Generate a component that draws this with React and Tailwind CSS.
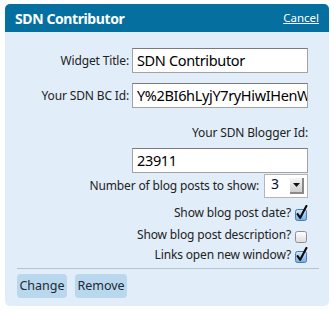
import React from "react";

const font = { fontFamily: '"Noto Sans", "DejaVu Sans", sans-serif' };

function Check({ checked }) {
  const id = checked ? "cbOn" : "cbOff";
  return (
    <svg width="14" height="16" viewBox="0 0 14 16" className="block">
      <defs>
        <linearGradient id={id} x1="0" y1="0" x2="0" y2="1">
          <stop offset="0" stopColor={checked ? "#cfe6fb" : "#ffffff"} />
          <stop offset="1" stopColor={checked ? "#74aee6" : "#dcdcdc"} />
        </linearGradient>
      </defs>
      <rect x="1.5" y="4.5" width="11" height="11" rx="2" fill={`url(#${id})`} stroke={checked ? "#4a7cb3" : "#8f8f8f"} />
      {checked && (
        <path d="M3.6 9.2 L6.2 12.8 L12.4 1" fill="none" stroke="#0c0c0c" strokeWidth="2.1" strokeLinecap="round" strokeLinejoin="round" />
      )}
    </svg>
  );
}

function TextInput({ value }) {
  return (
    <div className="w-[176px] h-[25px] shrink-0 bg-white border border-[#a3a3a3] border-t-[#7a7a7a] flex items-center pl-[4px] overflow-hidden whitespace-nowrap text-[14.5px] tracking-[-0.35px] text-black">
      {value}
    </div>
  );
}

function CheckRow({ label, checked }) {
  return (
    <div className="h-[20px] flex items-center justify-end gap-[3px]">
      <span>{label}</span>
      <Check checked={checked} />
    </div>
  );
}

export default function App() {
  return (
    <div className="w-[334px] h-[310px] bg-white pt-[4px] pl-[5px]" style={font}>
      <div className="w-[324px] rounded-[5px] overflow-hidden bg-[#e1eef9]">
        <div className="h-[28px] bg-[#05709f] flex items-center justify-between pl-[10px] pr-[10px]">
          <span className="text-white font-bold text-[14px] tracking-[-0.4px]">SDN Contributor</span>
          <span className="text-white underline text-[11.5px]">Cancel</span>
        </div>

        <div className="pr-[21px] pl-[12px] pt-[16px] text-[12px] tracking-[-0.15px] text-[#222]">
          <div className="flex items-center justify-end gap-[3px]">
            <span>Widget Title:</span>
            <TextInput value="SDN Contributor" />
          </div>
          <div className="flex items-center justify-end gap-[3px] mt-[10px]">
            <span>Your SDN BC Id:</span>
            <TextInput value="Y%2BI6hLyjY7ryHiwIHenWbPQ" />
          </div>
          <div className="text-right mt-[17px] leading-[15px]">Your SDN Blogger Id:</div>
          <div className="flex justify-end mt-[8px]">
            <TextInput value="23911" />
          </div>
          <div className="h-[24px] flex items-center justify-end gap-[5px] mt-[1px]">
            <span>Number of blog posts to show:</span>
            <div className="w-[44px] h-[24px] bg-white border border-[#b5b5b5] flex">
              <span className="flex-1 pl-[6px] text-[14px] leading-[17px] text-[#0a0a3a]">3</span>
              <span className="w-[14px] h-[16px] mt-[3px] mr-[3px] bg-gradient-to-b from-[#f6f6f6] to-[#cfcfcf] border-r-2 border-b-2 border-[#8a8a8a] flex items-center justify-center">
                <svg width="7" height="4" viewBox="0 0 7 4">
                  <path d="M0 0 H7 L3.5 4 Z" fill="#111" />
                </svg>
              </span>
            </div>
          </div>
          <div className="mt-[5px]">
            <CheckRow label="Show blog post date?" checked />
          </div>
          <div className="mt-[2px]">
            <CheckRow label="Show blog post description?" />
          </div>
          <CheckRow label="Links open new window?" checked />
        </div>

        <div className="ml-[12px] mr-[10px] mt-[3px] border-t border-[#b8c2ca]" />
        <div className="flex gap-[8px] pl-[12px] pt-[5px] pb-[8px]">
          <button className="h-[24px] w-[50px] rounded-[4px] bg-[#b9d8ee] text-[12.5px] text-[#1d2a35]">Change</button>
          <button className="h-[24px] w-[52px] rounded-[4px] bg-[#b9d8ee] text-[12.5px] text-[#1d2a35]">Remove</button>
        </div>
      </div>
    </div>
  );
}
